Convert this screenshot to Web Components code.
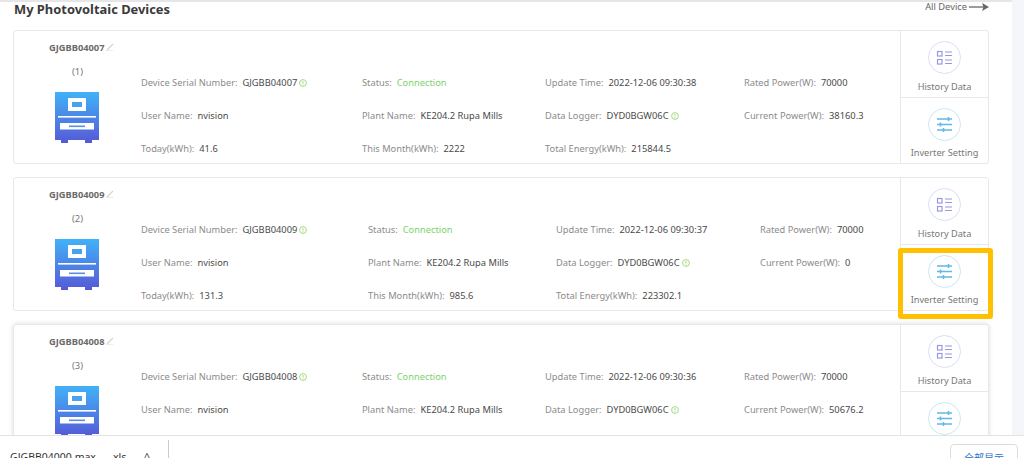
<!DOCTYPE html>
<html lang="en">
<head>
<meta charset="utf-8">
<title>My Photovoltaic Devices</title>
<style>
  html, body { margin: 0; height: 100%; overflow: hidden; background: #f5f6fa; }
  body { font-family: "Noto Sans", "Noto Sans CJK SC", sans-serif; }
</style>
</head>
<body>
<device-page>
  <device-card name="GJGBB04007" index="1" columns="221px 183px 199px 1fr">
    <info-field label="Device Serial Number"><span>GJGBB04007</span><info-dot></info-dot></info-field>
    <info-field label="Status" tone="ok">Connection</info-field>
    <info-field label="Update Time">2022-12-06 09:30:38</info-field>
    <info-field label="Rated Power(W)">70000</info-field>
    <info-field label="User Name">nvision</info-field>
    <info-field label="Plant Name">KE204.2 Rupa Mills</info-field>
    <info-field label="Data Logger"><span>DYD0BGW06C</span><info-dot></info-dot></info-field>
    <info-field label="Current Power(W)">38160.3</info-field>
    <info-field label="Today(kWh)">41.6</info-field>
    <info-field label="This Month(kWh)">2222</info-field>
    <info-field label="Total Energy(kWh)">215844.5</info-field>
  </device-card>
  <device-card name="GJGBB04009" index="2" columns="227px 188px 204px 1fr" marked>
    <info-field label="Device Serial Number"><span>GJGBB04009</span><info-dot></info-dot></info-field>
    <info-field label="Status" tone="ok">Connection</info-field>
    <info-field label="Update Time">2022-12-06 09:30:37</info-field>
    <info-field label="Rated Power(W)">70000</info-field>
    <info-field label="User Name">nvision</info-field>
    <info-field label="Plant Name">KE204.2 Rupa Mills</info-field>
    <info-field label="Data Logger"><span>DYD0BGW06C</span><info-dot></info-dot></info-field>
    <info-field label="Current Power(W)">0</info-field>
    <info-field label="Today(kWh)">131.3</info-field>
    <info-field label="This Month(kWh)">985.6</info-field>
    <info-field label="Total Energy(kWh)">223302.1</info-field>
  </device-card>
  <device-card name="GJGBB04008" index="3" columns="221px 183px 199px 1fr" raised>
    <info-field label="Device Serial Number"><span>GJGBB04008</span><info-dot></info-dot></info-field>
    <info-field label="Status" tone="ok">Connection</info-field>
    <info-field label="Update Time">2022-12-06 09:30:36</info-field>
    <info-field label="Rated Power(W)">70000</info-field>
    <info-field label="User Name">nvision</info-field>
    <info-field label="Plant Name">KE204.2 Rupa Mills</info-field>
    <info-field label="Data Logger"><span>DYD0BGW06C</span><info-dot></info-dot></info-field>
    <info-field label="Current Power(W)">50676.2</info-field>
  </device-card>
</device-page>

<script>
class DevicePage extends HTMLElement {
  constructor() {
    super();
    this.attachShadow({ mode: 'open' });
  }

  connectedCallback() {
    this.shadowRoot.innerHTML = `
      <style>
        :host { display: flex; flex-direction: column; height: 458px; overflow: hidden; }
        .main {
          flex: 1;
          min-height: 0;
          overflow: hidden;
          width: 1012px;
          background: #fff;
          border-top: 2px solid #e6e6e6;
          box-sizing: border-box;
        }
        .head {
          display: flex;
          justify-content: space-between;
          height: 28px;
          padding: 0 23px 0 14px;
        }
        h1 { margin: 0; font-size: 12.9px; line-height: 15px; font-weight: 700; color: #3a3a3a; }
        .all {
          display: flex;
          align-items: center;
          gap: 2px;
          height: 9px;
          font-size: 9.3px;
          color: #666;
        }
        .list { display: flex; flex-direction: column; gap: 13px; padding: 0 23px 0 13px; }
        .bar {
          display: flex;
          height: 23px;
          flex: none;
          box-sizing: border-box;
          background: #fff;
          border-top: 1px solid #e3e3e3;
          font-size: 10.5px;
          color: #333;
          overflow: hidden;
        }
        .file { display: flex; width: 168px; box-sizing: border-box; padding: 14px 0 0 10px; white-space: nowrap; }
        .file span:nth-child(1) { width: 103px; }
        .file span:nth-child(2) { width: 31px; }
        .sep { width: 1px; height: 18px; margin-top: 4px; background: #ccc; }
        .show {
          width: 68px;
          height: 30px;
          margin: 8px 6px 0 auto;
          box-sizing: border-box;
          border: 1px solid #dcdcdc;
          border-radius: 4px;
          text-align: center;
          padding-top: 5px;
          color: #2a6fc9;
          font-family: "Noto Sans CJK SC", sans-serif;
          font-size: 10px;
        }
      </style>
      <div class="main">
        <div class="head">
          <h1>My Photovoltaic Devices</h1>
          <div class="all">All Device
            <svg width="20" height="10" viewBox="0 0 20 10"><path d="M0 5H15" stroke="#666" stroke-width="1.3"/><path d="M13 1L20 5L13 9L14.5 5Z" fill="#666"/></svg>
          </div>
        </div>
        <div class="list"><slot></slot></div>
      </div>
      <div class="bar">
        <div class="file"><span>GJGBB04000.max....</span><span>xls</span><span>^</span></div>
        <div class="sep"></div>
        <div class="show">全部显示</div>
      </div>
    `;
  }
}

class DeviceCard extends HTMLElement {
  constructor() {
    super();
    this.attachShadow({ mode: 'open' });
  }

  connectedCallback() {
    const name = this.getAttribute('name');
    const index = this.getAttribute('index');
    const columns = this.getAttribute('columns');
    const gid = 'inv' + index;

    this.shadowRoot.innerHTML = `
      <style>
        :host {
          display: flex;
          position: relative;
          flex: none;
          height: 134px;
          box-sizing: border-box;
          background: #fff;
          border: 1px solid #e8e8e8;
          border-radius: 3px;
        }
        :host([raised]) { box-shadow: 0 0 5px rgba(0, 0, 0, .14); }
        .side { width: 127px; flex: none; }
        .name {
          display: flex;
          align-items: center;
          gap: 1px;
          height: 14px;
          margin: 9px 0 0 35px;
          font-size: 9.3px;
          font-weight: 700;
          color: #6a6a6a;
        }
        .num { margin-top: 11px; text-align: center; font-size: 9.4px; line-height: 14px; color: #777; }
        .side svg.inv { display: block; margin: 13px 0 0 41px; }
        .grid {
          flex: 1;
          min-width: 0;
          display: grid;
          grid-template-columns: ${columns};
          grid-auto-rows: 33px;
          padding-top: 35px;
          align-items: center;
        }
        .actions { width: 88px; box-sizing: border-box; flex: none; display: flex; flex-direction: column; border-left: 1px solid #e8e8e8; }
        .mark {
          position: absolute;
          left: 884px;
          top: 70px;
          width: 95px;
          height: 71px;
          box-sizing: border-box;
          border: 5px solid #ffc000;
          border-radius: 3px;
        }
      </style>
      <div class="side">
        <div class="name">${name}
          <svg width="8" height="8" viewBox="0 0 8 8"><path d="M1 7L7 1" stroke="#d4d4d4" stroke-width="1.2"/><path d="M0 7.5H7" stroke="#e4e4e4" stroke-width=".7"/></svg>
        </div>
        <div class="num">(${index})</div>
        <svg class="inv" width="44" height="52" viewBox="0 0 44 52">
          <defs>
            <linearGradient id="${gid}" x1="0" y1="0" x2="0" y2="1">
              <stop offset="0" stop-color="#41b2f8"/>
              <stop offset="1" stop-color="#5659d6"/>
            </linearGradient>
          </defs>
          <path d="M0 0H44V48H37V51H30V48H13V51H6V48H0Z" fill="url(#${gid})"/>
          <rect x="13" y="6" width="18" height="13" fill="#fff"/>
          <rect x="17" y="10" width="10" height="5" fill="#46a3ee"/>
          <rect x="3" y="24" width="38" height="1.6" fill="#fff"/>
          <rect x="5" y="31" width="34" height="6.5" fill="#fff"/>
          <rect x="14" y="33.5" width="16" height="1.6" fill="#5d8fe6"/>
        </svg>
      </div>
      <div class="grid"><slot></slot></div>
      <div class="actions">
        <action-tile label="History Data" kind="history"></action-tile>
        <action-tile label="${this.hasAttribute('raised') ? '' : 'Inverter Setting'}" kind="setting" last></action-tile>
      </div>
      ${this.hasAttribute('marked') ? '<div class="mark"></div>' : ''}
    `;
  }
}

class InfoField extends HTMLElement {
  constructor() {
    super();
    this.attachShadow({ mode: 'open' });
  }

  connectedCallback() {
    const tone = this.getAttribute('tone');
    this.shadowRoot.innerHTML = `
      <style>
        :host { display: block; font-size: 9.3px; line-height: 14px; color: #8b8b8b; white-space: nowrap; }
        .val { color: ${tone === 'ok' ? '#7bd46a' : '#4a4a4a'}; margin-left: 5px; }
      </style>
      ${this.getAttribute('label')}:<span class="val"><slot></slot></span>
    `;
  }
}

class InfoDot extends HTMLElement {
  constructor() {
    super();
    this.attachShadow({ mode: 'open' });
  }

  connectedCallback() {
    this.shadowRoot.innerHTML = `
      <style>
        :host { display: inline-block; width: 8px; height: 8px; margin-left: 2px; vertical-align: -1px; }
        svg { display: block; }
      </style>
      <svg width="8" height="8" viewBox="0 0 8 8" fill="none" stroke="#9cd66e">
        <circle cx="4" cy="4" r="3.4" stroke-width=".9"/>
        <path d="M4 2V4.6M4 5.4V6.2" stroke-width=".9"/>
      </svg>
    `;
  }
}

class ActionTile extends HTMLElement {
  constructor() {
    super();
    this.attachShadow({ mode: 'open' });
  }

  connectedCallback() {
    const isHistory = this.getAttribute('kind') === 'history';
    const icon = isHistory
      ? `<svg width="33" height="33" viewBox="0 0 33 33" fill="none" stroke="#9898e4" stroke-width="1.2">
          <circle cx="16.5" cy="16.5" r="16" stroke="#dcdcf8" stroke-width="1"/>
          <rect x="9.5" y="10.5" width="4.5" height="4.5"/>
          <rect x="9.5" y="18.5" width="4.5" height="4.5"/>
          <path d="M17 11H24M17 14.5H24M17 19H24M17 22.5H24"/>
        </svg>`
      : `<svg width="33" height="33" viewBox="0 0 33 33" fill="none" stroke="#62b8ea" stroke-width="1.3">
          <circle cx="16.5" cy="16.5" r="16" stroke="#c8e6f6" stroke-width="1"/>
          <path d="M9 11H24M9 16.5H24M9 22H24"/>
          <path d="M20.5 9V13M12.5 14.5V18.5M15.5 20V24" stroke-width="1.6"/>
        </svg>`;
    this.shadowRoot.innerHTML = `
      <style>
        :host {
          display: flex;
          flex: 1;
          flex-direction: column;
          align-items: center;
          box-sizing: border-box;
          padding-top: 10px;
          border-bottom: 1px solid #e8e8e8;
        }
        :host([last]) { border-bottom: 0; }
        svg { display: block; }
        span { margin-top: 6px; font-size: 9.2px; line-height: 14px; color: #777; white-space: nowrap; }
        :host([last]) span { margin-top: 5px; }
      </style>
      ${icon}
      <span>${this.getAttribute('label')}</span>
    `;
  }
}

customElements.define('device-page', DevicePage);
customElements.define('device-card', DeviceCard);
customElements.define('info-field', InfoField);
customElements.define('info-dot', InfoDot);
customElements.define('action-tile', ActionTile);
</script>
</body>
</html>
